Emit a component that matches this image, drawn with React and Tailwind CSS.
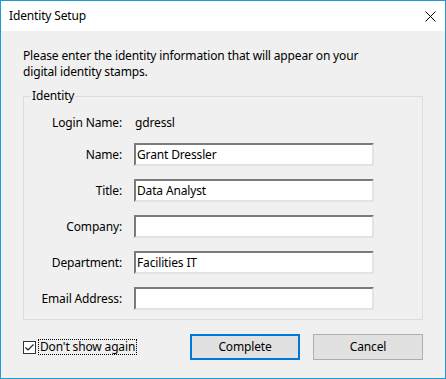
import React from 'react';

const font = { fontFamily: '"Noto Sans", "Open Sans", sans-serif' };

function Field({ label, value }) {
    return (
        <div className="flex items-center h-[23px]">
            <div className="w-[98px] text-right text-[12px] tracking-[-0.15px] text-black">{label}</div>
            <div className="ml-[12px] w-[240px] h-[23px] bg-white border-t-2 border-l-2 border-t-[#7a7a7a] border-l-[#7a7a7a] border-b-2 border-r-2 border-b-[#e3e3e3] border-r-[#e3e3e3] flex items-center pl-[1px] text-[12px] tracking-[-0.15px] text-black leading-none">
                {value}
            </div>
        </div>
    );
}

export default function App() {
    return (
        <div className="w-[446px] h-[379px] border border-[#1d9bd3] flex flex-col bg-[#f0f0f0] tracking-[-0.15px]" style={font}>
            {/* title bar */}
            <div className="h-[30px] bg-white flex items-center justify-between pl-[8px] pr-[9px]">
                <span className="text-[12px] text-black">Identity Setup</span>
                <svg width="11" height="11" viewBox="0 0 11 11" className="block">
                    <path d="M0.5 0.5 L10.5 10.5 M10.5 0.5 L0.5 10.5" stroke="#000" strokeWidth="1" />
                </svg>
            </div>

            <div className="flex-1 px-[22px] pt-[17px]">
                <p className="text-[12px] leading-[16px] text-black w-[360px]">
                    Please enter the identity information that will appear on your digital identity stamps.
                </p>

                <fieldset className="mt-[8px] w-[400px] h-[232px] border border-[#dcdcdc]">
                    <legend className="ml-[7px] px-[1px] text-[12px] leading-[16px] text-black">Identity</legend>
                    <div className="flex flex-col">
                        <div className="flex items-center h-[16px] mt-[11px] text-[12px] text-black">
                            <div className="w-[98px] text-right">Login Name:</div>
                            <div className="ml-[13px]">gdressl</div>
                        </div>
                        <div className="flex flex-col gap-[13px] mt-[12px]">
                            <Field label="Name:" value="Grant Dressler" />
                            <Field label="Title:" value="Data Analyst" />
                            <Field label="Company:" value="" />
                            <Field label="Department:" value="Facilities IT" />
                            <Field label="Email Address:" value="" />
                        </div>
                    </div>
                </fieldset>

                <div className="flex items-center mt-[14px]">
                    <div className="flex items-center">
                        <div className="w-[13px] h-[13px] border border-[#333] bg-white flex items-center justify-center">
                            <svg width="11" height="11" viewBox="0 0 11 11">
                                <path d="M1.5 5.5 L4 8 L9.5 2.5" stroke="#222" strokeWidth="1.2" fill="none" />
                            </svg>
                        </div>
                        <span className="ml-[2px] px-[1px] border border-dotted border-black text-[12px] leading-[14px] text-black">Don't show again</span>
                    </div>
                    <div className="ml-auto flex gap-[13px]">
                        <button className="w-[110px] h-[26px] border-2 border-[#0078d7] bg-[#e1e1e1] text-[12px] text-black">Complete</button>
                        <button className="w-[110px] h-[26px] border border-[#adadad] bg-[#e1e1e1] text-[12px] text-black">Cancel</button>
                    </div>
                </div>
            </div>
        </div>
    );
}
